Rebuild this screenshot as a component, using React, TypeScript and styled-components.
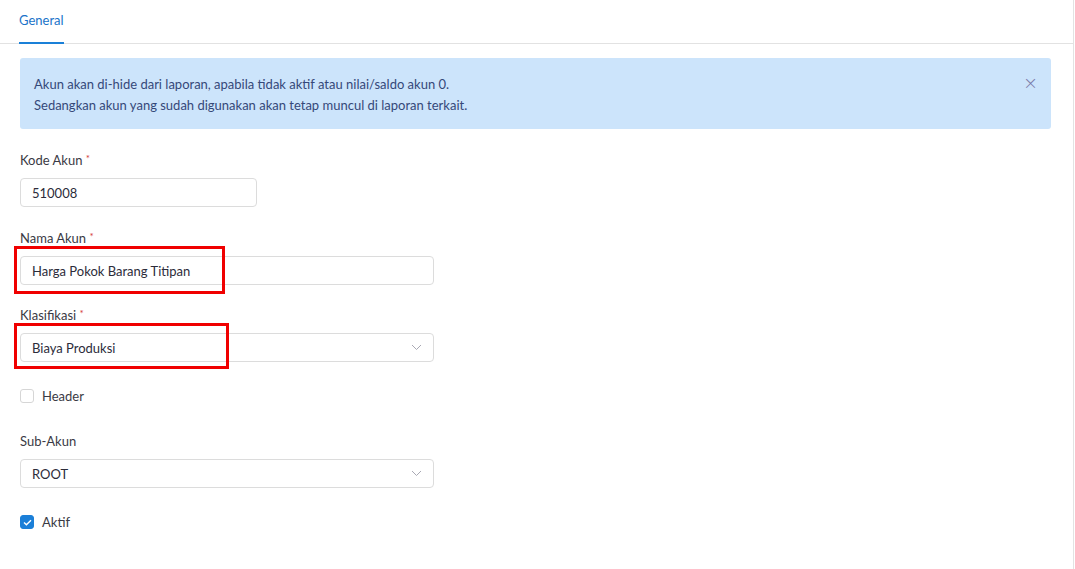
import styled, { createGlobalStyle } from "styled-components";

const GlobalStyle = createGlobalStyle`
  html, body {
    margin: 0;
    padding: 0;
    background: #ffffff;
  }
  * {
    box-sizing: border-box;
  }
`;

const Chevron = () => (
  <svg width="11" height="7" viewBox="0 0 11 7" fill="none">
    <path d="M1 1L5.5 5.5L10 1" stroke="#a9a9b4" strokeWidth="1" />
  </svg>
);

const CheckMark = () => (
  <svg width="9" height="7" viewBox="0 0 9 7" fill="none">
    <path d="M1 3.6L3.4 5.8L8 1.2" stroke="#ffffff" strokeWidth="1.4" />
  </svg>
);

const App = () => {
  return (
    <Page>
      <GlobalStyle />
      <TabBar>
        <Tab>General</Tab>
      </TabBar>

      <Content>
        <Alert>
          <AlertText>
            <p>Akun akan di-hide dari laporan, apabila tidak aktif atau nilai/saldo akun 0.</p>
            <p>Sedangkan akun yang sudah digunakan akan tetap muncul di laporan terkait.</p>
          </AlertText>
          <CloseButton>×</CloseButton>
        </Alert>

        <Field>
          <Label>
            Kode Akun <Required>*</Required>
          </Label>
          <Input $width={237}>510008</Input>
        </Field>

        <Field $gap={19}>
          <Label>
            Nama Akun <Required>*</Required>
          </Label>
          <Highlighted>
            <Input $width={414}>Harga Pokok Barang Titipan</Input>
            <RedMark $width={211} $height={48} />
          </Highlighted>
        </Field>

        <Field $gap={26}>
          <Label>
            Klasifikasi <Required>*</Required>
          </Label>
          <Highlighted>
            <Input $width={414}>
              Biaya Produksi
              <Chevron />
            </Input>
            <RedMark $width={215} $height={46} />
          </Highlighted>
        </Field>

        <CheckRow>
          <CheckBox $checked={false} />
          <CheckLabel>Header</CheckLabel>
        </CheckRow>

        <Field $gap={26}>
          <Label>Sub-Akun</Label>
          <Input $width={414}>
            ROOT
            <Chevron />
          </Input>
        </Field>

        <CheckRow>
          <CheckBox $checked>
            <CheckMark />
          </CheckBox>
          <CheckLabel>Aktif</CheckLabel>
        </CheckRow>
      </Content>
    </Page>
  );
};

export default App;

const Page = styled.div`
  width: 1074px;
  height: 569px;
  border-right: 1px solid #e3e3e3;
  font-family: "Lato", "Noto Sans", sans-serif;
  color: #333340;
  overflow: hidden;
`;

const TabBar = styled.div`
  display: flex;
  height: 44px;
  padding-left: 19px;
  border-bottom: 1px solid #e2e2e2;
`;

const Tab = styled.div`
  display: flex;
  align-items: center;
  padding-bottom: 3px;
  font-size: 13px;
  color: #1a73c9;
  border-bottom: 2px solid #1a80d8;
  margin-bottom: -1px;
`;

const Content = styled.div`
  display: flex;
  flex-direction: column;
  align-items: flex-start;
  padding: 14px 22px 0 20px;
`;

const Alert = styled.div`
  display: flex;
  justify-content: space-between;
  width: 100%;
  height: 71px;
  padding: 16px 13px 0 14px;
  background: #cce4fb;
  border-radius: 3px;
  margin-bottom: 20px;
`;

const AlertText = styled.div`
  font-size: 13px;
  line-height: 21px;
  color: #354879;

  p {
    margin: 0;
  }
`;

const CloseButton = styled.span`
  margin-top: -1px;
  font-size: 18px;
  line-height: 20px;
  color: #7a78a8;
  font-family: "DejaVu Sans", sans-serif;
  font-weight: 300;
`;

const Field = styled.div<{ $gap?: number }>`
  display: flex;
  flex-direction: column;
  margin-bottom: ${({ $gap }) => $gap ?? 20}px;
`;

const Label = styled.div`
  font-size: 13px;
  line-height: 18px;
  margin-bottom: 9px;
  color: #3a3a44;
`;

const Required = styled.span`
  color: #d33a3a;
  font-size: 10px;
  vertical-align: 3px;
`;

const Highlighted = styled.div`
  position: relative;
`;

const RedMark = styled.div<{ $width: number; $height: number }>`
  position: absolute;
  left: -6px;
  top: -10px;
  width: ${({ $width }) => $width}px;
  height: ${({ $height }) => $height}px;
  border: 3px solid #f00000;
  pointer-events: none;
`;

const Input = styled.div<{ $width: number }>`
  display: flex;
  align-items: center;
  justify-content: space-between;
  width: ${({ $width }) => $width}px;
  height: 29px;
  padding: 0 11px 0 11px;
  border: 1px solid #dcdcdc;
  border-radius: 4px;
  font-size: 13px;
  color: #2c2c3a;
`;

const CheckRow = styled.div`
  display: flex;
  align-items: center;
  gap: 8px;
  height: 16px;
  margin-bottom: 28px;
`;

const CheckBox = styled.div<{ $checked: boolean }>`
  display: flex;
  align-items: center;
  justify-content: center;
  width: 14px;
  height: 14px;
  border-radius: 3px;
  border: 1px solid ${({ $checked }) => ($checked ? "#1b7fd8" : "#d6d6d6")};
  background: ${({ $checked }) => ($checked ? "#1b7fd8" : "#ffffff")};
`;

const CheckLabel = styled.span`
  font-size: 13px;
  color: #3a3a44;
`;
